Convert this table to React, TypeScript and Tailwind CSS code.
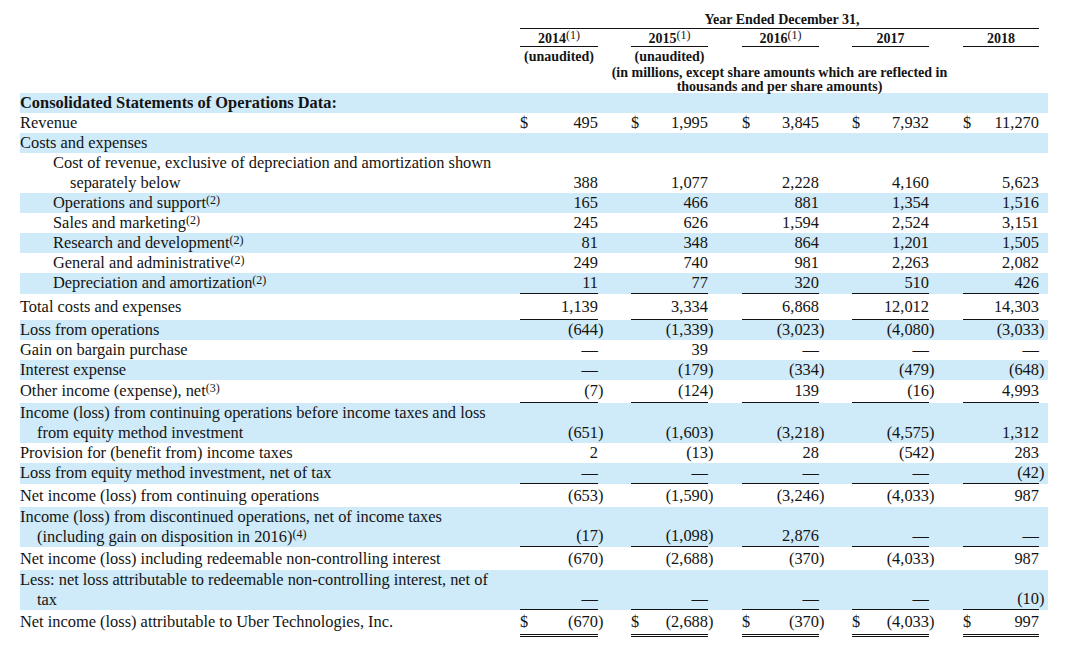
import React from "react";

// shared column template: label | 5 x (amount span + paren gap)
const COLS =
  "grid w-[1028px] grid-cols-[500px_78px_33px_77px_34px_77px_33px_77px_34px_76px_9px]";

type Line = "single" | "double" | undefined;

type RowData = {
  lines: string[];
  sup?: string;
  indent?: 0 | 1;
  bold?: boolean;
  vals?: string[];
  dollar?: boolean;
  line?: Line;
  h: string;
  blue?: boolean;
};

const ROWS: RowData[] = [
  { lines: ["Consolidated Statements of Operations Data:"], bold: true, h: "h-5", blue: true },
  { lines: ["Revenue"], h: "h-5", dollar: true, vals: ["495", "1,995", "3,845", "7,932", "11,270"] },
  { lines: ["Costs and expenses"], h: "h-5", blue: true },
  {
    lines: ["Cost of revenue, exclusive of depreciation and amortization shown", "separately below"],
    indent: 1,
    h: "h-10",
    vals: ["388", "1,077", "2,228", "4,160", "5,623"],
  },
  { lines: ["Operations and support"], sup: "2", indent: 1, h: "h-5", blue: true, vals: ["165", "466", "881", "1,354", "1,516"] },
  { lines: ["Sales and marketing"], sup: "2", indent: 1, h: "h-5", vals: ["245", "626", "1,594", "2,524", "3,151"] },
  { lines: ["Research and development"], sup: "2", indent: 1, h: "h-5", blue: true, vals: ["81", "348", "864", "1,201", "1,505"] },
  { lines: ["General and administrative"], sup: "2", indent: 1, h: "h-5", vals: ["249", "740", "981", "2,263", "2,082"] },
  {
    lines: ["Depreciation and amortization"],
    sup: "2",
    indent: 1,
    h: "h-[21px]",
    blue: true,
    line: "single",
    vals: ["11", "77", "320", "510", "426"],
  },
  { lines: ["Total costs and expenses"], h: "h-[26px]", line: "single", vals: ["1,139", "3,334", "6,868", "12,012", "14,303"] },
  { lines: ["Loss from operations"], h: "h-5", blue: true, vals: ["(644)", "(1,339)", "(3,023)", "(4,080)", "(3,033)"] },
  { lines: ["Gain on bargain purchase"], h: "h-5", vals: ["—", "39", "—", "—", "—"] },
  { lines: ["Interest expense"], h: "h-5", blue: true, vals: ["—", "(179)", "(334)", "(479)", "(648)"] },
  { lines: ["Other income (expense), net"], sup: "3", h: "h-[23px]", line: "single", vals: ["(7)", "(124)", "139", "(16)", "4,993"] },
  {
    lines: ["Income (loss) from continuing operations before income taxes and loss", "from equity method investment"],
    h: "h-10",
    blue: true,
    vals: ["(651)", "(1,603)", "(3,218)", "(4,575)", "1,312"],
  },
  { lines: ["Provision for (benefit from) income taxes"], h: "h-5", vals: ["2", "(13)", "28", "(542)", "283"] },
  {
    lines: ["Loss from equity method investment, net of tax"],
    h: "h-[21px]",
    blue: true,
    line: "single",
    vals: ["—", "—", "—", "—", "(42)"],
  },
  { lines: ["Net income (loss) from continuing operations"], h: "h-[23px]", vals: ["(653)", "(1,590)", "(3,246)", "(4,033)", "987"] },
  {
    lines: ["Income (loss) from discontinued operations, net of income taxes", "(including gain on disposition in 2016)"],
    sup: "4",
    h: "h-10",
    blue: true,
    line: "single",
    vals: ["(17)", "(1,098)", "2,876", "—", "—"],
  },
  {
    lines: ["Net income (loss) including redeemable non-controlling interest"],
    h: "h-[23px]",
    vals: ["(670)", "(2,688)", "(370)", "(4,033)", "987"],
  },
  {
    lines: ["Less: net loss attributable to redeemable non-controlling interest, net of", "tax"],
    h: "h-10",
    blue: true,
    line: "single",
    vals: ["—", "—", "—", "—", "(10)"],
  },
  {
    lines: ["Net income (loss) attributable to Uber Technologies, Inc."],
    h: "h-[27px]",
    dollar: true,
    line: "double",
    vals: ["(670)", "(2,688)", "(370)", "(4,033)", "997"],
  },
];

const YEARS = [
  { y: "2014", note: true, unaudited: true },
  { y: "2015", note: true, unaudited: true },
  { y: "2016", note: true, unaudited: false },
  { y: "2017", note: false, unaudited: false },
  { y: "2018", note: false, unaudited: false },
];

function Sup({ n, className = "" }: { n: string; className?: string }) {
  return <sup className={"text-[12px] top-[-4px] font-normal " + className}>({n})</sup>;
}

function lineCls(line: Line) {
  if (line === "single") return "border-b border-[#111]";
  if (line === "double") return "border-b-[3px] border-double border-[#111]";
  return "";
}

function padCls(line: Line) {
  if (line === "single") return "pb-px";
  if (line === "double") return "pb-[3px]";
  return "";
}

function Row({ row }: { row: RowData }) {
  const multi = row.lines.length > 1;
  const align = multi ? "items-end" : "items-center";
  return (
    <div className={`${COLS} ${row.h} ${row.blue ? "bg-[#cfeaf8]" : ""}`}>
      <div className={`flex flex-col ${multi ? "justify-start" : "justify-center " + padCls(row.line)}`}>
        {row.lines.map((ln, i) => {
          const pad =
            row.indent === 1 ? (i === 0 ? "pl-[33px]" : "pl-[50px]") : i === 0 ? "" : "pl-[17px]";
          return (
            <div key={i} className={`whitespace-nowrap leading-5 ${pad} ${row.bold ? "font-bold" : ""}`}>
              {ln}
              {i === row.lines.length - 1 && row.sup && <Sup n={row.sup} />}
            </div>
          );
        })}
      </div>
      {row.vals &&
        row.vals.map((v, i) => {
          const paren = v.endsWith(")");
          const body = paren ? v.slice(0, -1) : v;
          return (
            <React.Fragment key={i}>
              <div className={`flex justify-between ${align} ${lineCls(row.line)}`}>
                <span className="leading-5">{row.dollar ? "$" : ""}</span>
                <span className="leading-5 whitespace-nowrap">{body}</span>
              </div>
              <div className={`flex ${align} ${padCls(row.line)}`}>
                <span className="leading-5">{paren ? ")" : ""}</span>
              </div>
            </React.Fragment>
          );
        })}
    </div>
  );
}

export default function App() {
  return (
    <div className="w-[1080px] h-[653px] bg-white text-[#141414] text-[16.4px] font-['Liberation_Serif',serif] overflow-hidden">
      {/* column headings */}
      <div className="h-[93px] pl-5 font-bold text-[14px]">
        <div className={`${COLS} pt-3`}>
          <div className="col-start-2 col-end-11 border-b border-[#111] text-center leading-4 pl-[5px]">
            Year Ended December 31,
          </div>
        </div>
        <div className={`${COLS} pt-[2px]`}>
          <div />
          {YEARS.map((yr) => (
            <React.Fragment key={yr.y}>
              <div className="border-b border-[#111] text-center leading-[15px] whitespace-nowrap">
                {yr.y}
                {yr.note && <Sup n="1" className="text-[10px] top-[-3px] font-bold" />}
              </div>
              <div />
            </React.Fragment>
          ))}
        </div>
        <div className={`${COLS} mt-[2px]`}>
          <div />
          {YEARS.map((yr) => (
            <React.Fragment key={yr.y}>
              <div className="text-center leading-4 whitespace-nowrap">{yr.unaudited ? "(unaudited)" : ""}</div>
              <div />
            </React.Fragment>
          ))}
        </div>
        <div className={`${COLS} mt-px`}>
          <div className="col-start-2 col-end-11 text-center leading-[14px] whitespace-nowrap">
            (in millions, except share amounts which are reflected in
            <br />
            thousands and per share amounts)
          </div>
        </div>
      </div>

      {/* statement rows */}
      <div className="pl-5">
        {ROWS.map((r, i) => (
          <Row key={i} row={r} />
        ))}
      </div>
    </div>
  );
}
